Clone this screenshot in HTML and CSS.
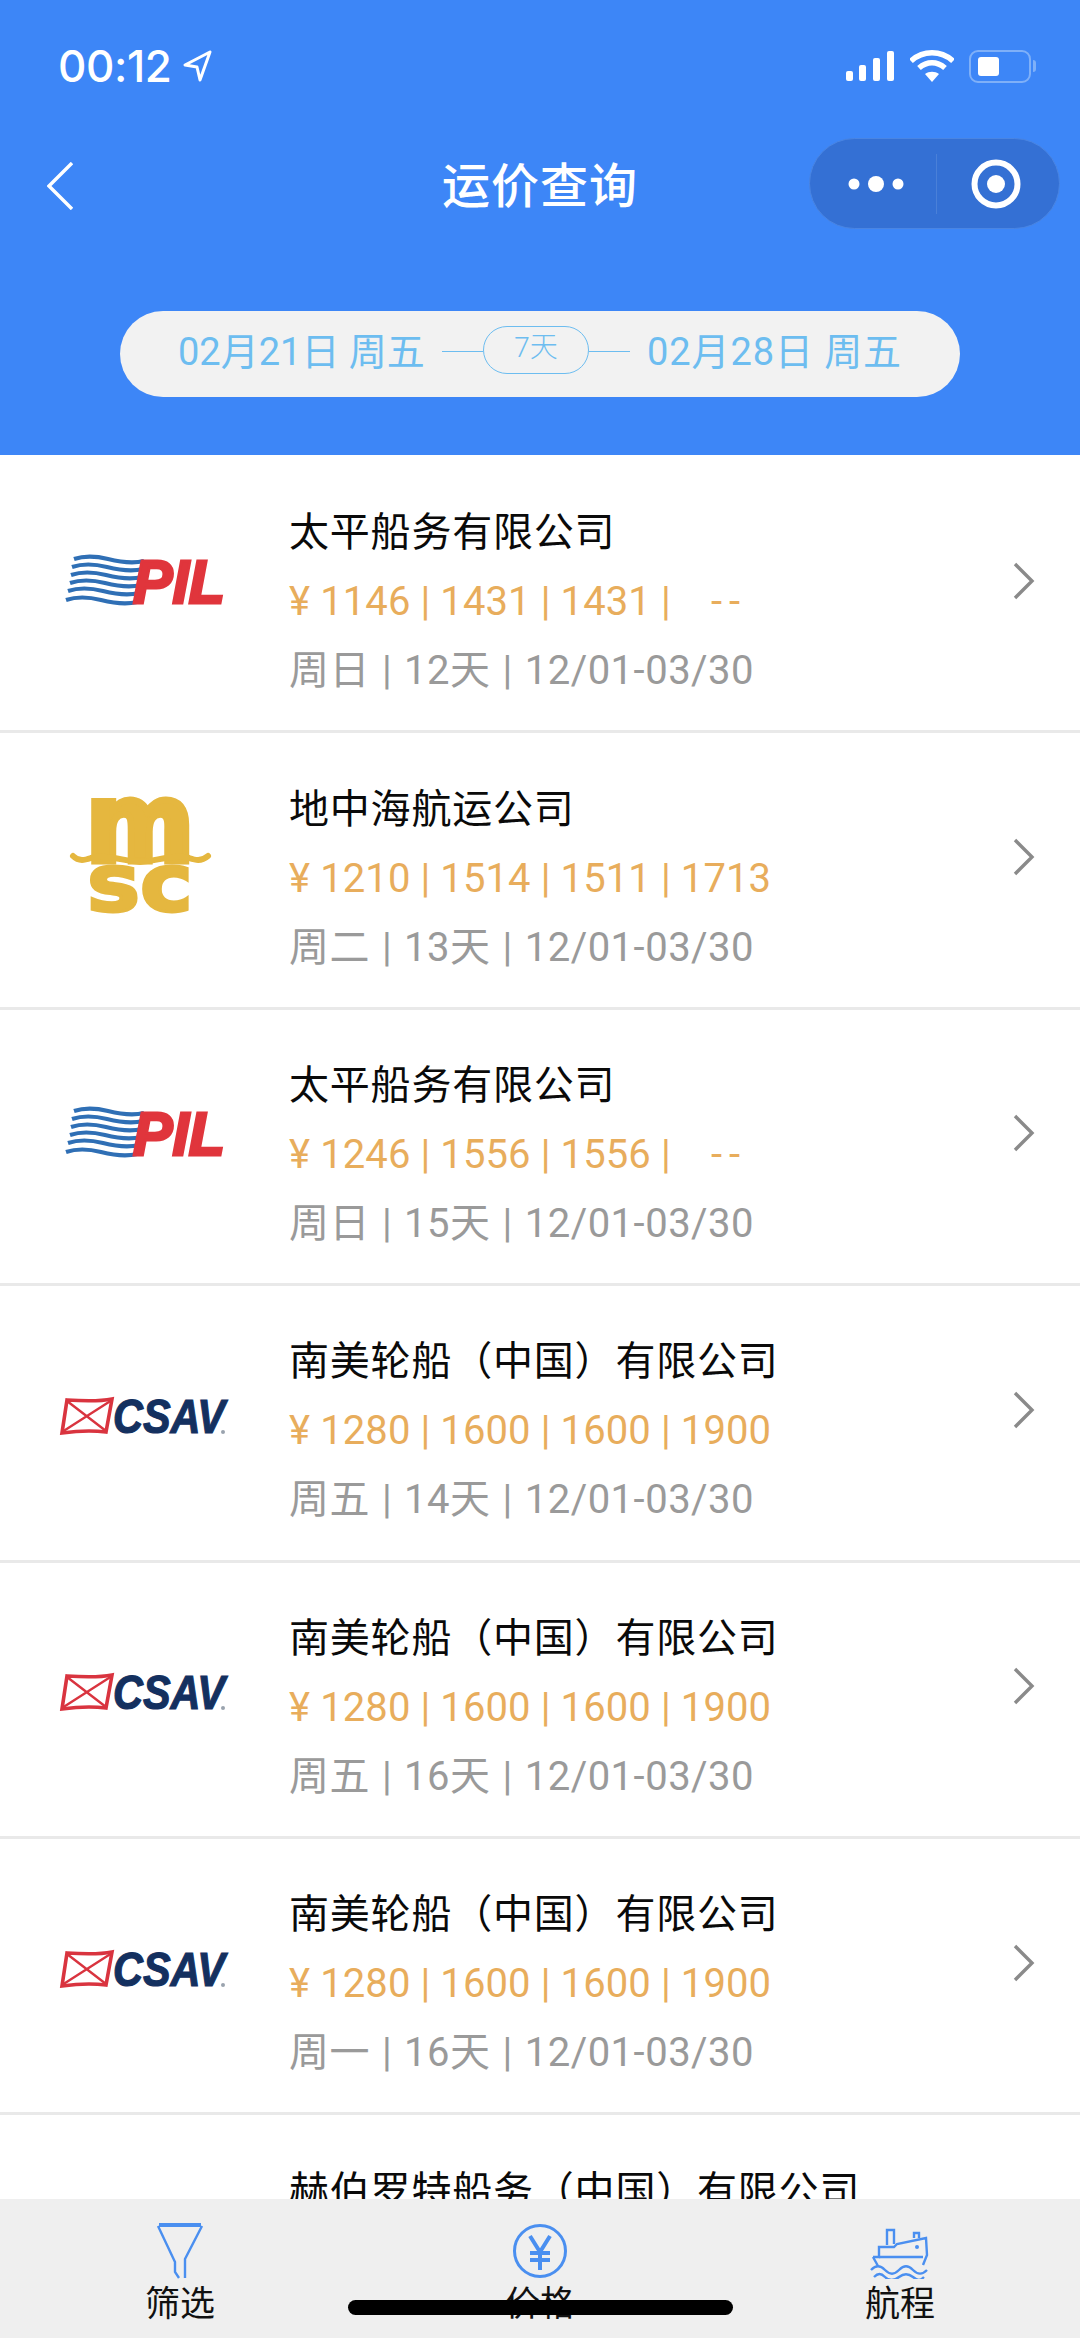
FILE: index.html
```html
<!DOCTYPE html>
<html lang="zh">
<head>
<meta charset="utf-8">
<title>运价查询</title>
<link rel="stylesheet" href="styles.css">
</head>
<body>
<svg class="defs" width="0" height="0" aria-hidden="true">
  <symbol id="chev" viewBox="0 0 24 40">
    <path d="M3 3l17 17L3 37" fill="none" stroke="#8a8a8a" stroke-width="3.4"/>
  </symbol>
  <symbol id="waves" viewBox="0 0 289 160">
    <g fill="none" stroke="#2f6fb5" stroke-width="4.2">
      <path d="M74 58c12-4 22-3 34 0s24 5 36 2"/>
      <path d="M72 66c12-4 23-3 35 0s24 5 36 2"/>
      <path d="M71 74c12-4 23-3 35 0s24 5 36 2"/>
      <path d="M70 82c12-4 23-3 35 0s24 5 36 2"/>
      <path d="M68 90c12-4 23-3 35 0s24 5 36 2"/>
      <path d="M66 99c12-4 23-3 35 0s24 5 36 2"/>
    </g>
  </symbol>
  <symbol id="flag" viewBox="0 0 289 160">
    <path d="M67 70c15 1 30 2 45-1l-6 33c-15-2-30-1-44 1z" fill="none" stroke="#d9343f" stroke-width="3.6"/>
    <path d="M67 71l39 30M112 70L62 102" fill="none" stroke="#d9343f" stroke-width="2.4"/>
    <circle cx="223" cy="102" r="2" fill="#9aa3ae"/>
  </symbol>
  <symbol id="wave-msc" viewBox="0 0 289 160">
    <path d="M73 79c6 6 12 4 18 2 16-4 32 3 49 4 17-1 33-8 49-4 6 2 12 4 19-2" fill="none" stroke="#e5b73f" stroke-width="6" stroke-linecap="round"/>
  </symbol>
</svg>

<div class="phone">
  <header class="header">
    <div class="status">
      <div class="time">00:12
        <svg class="loc" viewBox="0 0 30 32"><path d="M28 2L3 15l12 2 3 13z" fill="none" stroke="#fff" stroke-width="3" stroke-linejoin="round"/></svg>
      </div>
      <div class="status-right">
        <svg class="signal" viewBox="0 0 50 32"><rect x="1" y="21" width="7" height="10" rx="2"/><rect x="14" y="15" width="7" height="16" rx="2"/><rect x="28" y="8" width="7" height="23" rx="2"/><rect x="42" y="1" width="7" height="30" rx="2"/></svg>
        <svg class="wifi" viewBox="0 0 44 32"><path d="M1 11C13 0 31 0 43 11" fill="none" stroke="#fff" stroke-width="5.5"/><path d="M9 18c8-7 18-7 26 0" fill="none" stroke="#fff" stroke-width="5.5"/><path d="M15 24c4-3 10-3 14 0l-7 8z" fill="#fff"/></svg>
        <div class="battery"><span class="battery-level"></span></div>
        <span class="battery-nub"></span>
      </div>
    </div>
    <div class="nav">
      <div class="nav-left">
        <svg class="back" viewBox="0 0 26 48"><path d="M25 1L2 24l23 23" fill="none" stroke="#fff" stroke-width="3.4"/></svg>
      </div>
      <h1 class="nav-title">运价查询</h1>
      <div class="nav-right">
        <div class="capsule">
          <div class="capsule-cell">
            <svg class="dots" viewBox="0 0 56 20"><circle cx="6" cy="10" r="5.5"/><circle cx="28" cy="10" r="8"/><circle cx="50" cy="10" r="5.5"/></svg>
          </div>
          <div class="capsule-cell capsule-cell-right">
            <svg class="target" viewBox="0 0 50 50"><circle cx="25" cy="25" r="21.5" fill="none" stroke="#fff" stroke-width="6"/><circle cx="25" cy="25" r="9" fill="#fff"/></svg>
          </div>
        </div>
      </div>
    </div>
    <div class="range">
      <span class="range-date">02月21日 周五</span>
      <span class="range-line range-line-left"></span>
      <span class="range-days">7天</span>
      <span class="range-line range-line-right"></span>
      <span class="range-date range-date-end">02月28日 周五</span>
    </div>
  </header>

  <main class="list">
    <article class="row">
      <svg class="logo" viewBox="0 0 289 160"><use href="#waves"/><text class="logo-pil-text" x="133" y="102" textLength="92" lengthAdjust="spacingAndGlyphs">PIL</text></svg>
      <div class="info">
        <div class="name">太平船务有限公司</div>
        <div class="price">¥ 1146 | 1431 | 1431 |&nbsp;&nbsp;&nbsp; <span class="dash">--</span></div>
        <div class="meta">周日 | 12天 | 12/01-03/30</div>
      </div>
      <svg class="chev"><use href="#chev"/></svg>
    </article>
    <article class="row">
      <svg class="logo" viewBox="0 0 289 160"><text class="logo-msc-m" x="86" y="84" textLength="108" lengthAdjust="spacingAndGlyphs">m</text><use href="#wave-msc"/><text class="logo-msc-sc" x="87" y="134" textLength="106" lengthAdjust="spacingAndGlyphs">sc</text></svg>
      <div class="info">
        <div class="name">地中海航运公司</div>
        <div class="price">¥ 1210 | 1514 | 1511 | 1713</div>
        <div class="meta">周二 | 13天 | 12/01-03/30</div>
      </div>
      <svg class="chev"><use href="#chev"/></svg>
    </article>
    <article class="row">
      <svg class="logo" viewBox="0 0 289 160"><use href="#waves"/><text class="logo-pil-text" x="133" y="102" textLength="92" lengthAdjust="spacingAndGlyphs">PIL</text></svg>
      <div class="info">
        <div class="name">太平船务有限公司</div>
        <div class="price">¥ 1246 | 1556 | 1556 |&nbsp;&nbsp;&nbsp; <span class="dash">--</span></div>
        <div class="meta">周日 | 15天 | 12/01-03/30</div>
      </div>
      <svg class="chev"><use href="#chev"/></svg>
    </article>
    <article class="row">
      <svg class="logo" viewBox="0 0 289 160"><use href="#flag"/><text class="logo-csav-text" x="113" y="103" textLength="112" lengthAdjust="spacingAndGlyphs">CSAV</text></svg>
      <div class="info">
        <div class="name">南美轮船（中国）有限公司</div>
        <div class="price">¥ 1280 | 1600 | 1600 | 1900</div>
        <div class="meta">周五 | 14天 | 12/01-03/30</div>
      </div>
      <svg class="chev"><use href="#chev"/></svg>
    </article>
    <article class="row">
      <svg class="logo" viewBox="0 0 289 160"><use href="#flag"/><text class="logo-csav-text" x="113" y="103" textLength="112" lengthAdjust="spacingAndGlyphs">CSAV</text></svg>
      <div class="info">
        <div class="name">南美轮船（中国）有限公司</div>
        <div class="price">¥ 1280 | 1600 | 1600 | 1900</div>
        <div class="meta">周五 | 16天 | 12/01-03/30</div>
      </div>
      <svg class="chev"><use href="#chev"/></svg>
    </article>
    <article class="row">
      <svg class="logo" viewBox="0 0 289 160"><use href="#flag"/><text class="logo-csav-text" x="113" y="103" textLength="112" lengthAdjust="spacingAndGlyphs">CSAV</text></svg>
      <div class="info">
        <div class="name">南美轮船（中国）有限公司</div>
        <div class="price">¥ 1280 | 1600 | 1600 | 1900</div>
        <div class="meta">周一 | 16天 | 12/01-03/30</div>
      </div>
      <svg class="chev"><use href="#chev"/></svg>
    </article>
    <article class="row">
      <svg class="logo"></svg>
      <div class="info">
        <div class="name">赫伯罗特船务（中国）有限公司</div>
      </div>
    </article>
  </main>

  <nav class="tabs">
    <div class="tab">
      <svg class="tab-icon" viewBox="0 0 60 56"><path d="M9 2h42" fill="none" stroke="#4a8ff0" stroke-width="4"/><path d="M8 3l17 36v10l4 6M52 3L35 36v19" fill="none" stroke="#4a8ff0" stroke-width="2.4"/></svg>
      <span class="tab-label">筛选</span>
    </div>
    <div class="tab">
      <svg class="tab-icon" viewBox="0 0 60 56"><circle cx="30" cy="28" r="25.5" fill="none" stroke="#4a8ff0" stroke-width="3"/><path d="M20 13l10 16 10-16M30 29v18M20 30h20M20 37h20" fill="none" stroke="#4a8ff0" stroke-width="4"/></svg>
      <span class="tab-label">价格</span>
    </div>
    <div class="tab">
      <svg class="tab-icon" viewBox="0 0 60 56"><g fill="none" stroke="#4a8ff0" stroke-width="2.4"><path d="M17 22V7h7v14M44 15v-5h5v5"/><path d="M3 34h6V24h15l3-3 29-6 1 17-4 10"/><path d="M3 34l5 9M9 34h44"/><path d="M1 47c5-5 9-5 14 0s9 5 14 0 9-5 14 0 9 5 14 0"/><path d="M4 54c4-4 7-4 11 0s9 4 14 0 9-4 14 0 7 4 11 0"/></g><circle cx="47" cy="24" r="2" fill="#4a8ff0"/></svg>
      <span class="tab-label">航程</span>
    </div>
  </nav>
  <div class="home-bar"></div>
</div>
</body>
</html>
```
FILE: styles.css
```css
* { box-sizing: border-box; }
html, body { margin: 0; padding: 0; }
body {
  font-family: Roboto, "Noto Sans CJK SC", sans-serif;
  background: #fff;
  overflow: hidden;
}
.defs { position: absolute; }
.phone {
  position: relative;
  width: 1080px;
  height: 2338px;
  display: flex;
  flex-direction: column;
  overflow: hidden;
}

/* Header */
.header {
  flex: none;
  height: 455px;
  background: #3d86f7;
  color: #fff;
}
.status {
  height: 138px;
  padding: 44px 44px 0 58px;
  display: flex;
  justify-content: space-between;
  align-items: flex-start;
}
.time {
  display: flex;
  align-items: center;
  gap: 10px;
  font-family: Inter, sans-serif;
  font-size: 44px;
  font-weight: 500;
  line-height: 44px;
  letter-spacing: -0.4px;
}
.loc { width: 30px; height: 32px; }
.status-right {
  display: flex;
  align-items: center;
  height: 44px;
}
.signal { width: 50px; height: 32px; fill: #fff; }
.wifi { width: 44px; height: 32px; margin-left: 15px; }
.battery {
  width: 62px;
  height: 33px;
  margin-left: 15px;
  padding: 5px 7px;
  border: 2.5px solid #7fb0f8;
  border-radius: 9px;
}
.battery-level {
  display: block;
  width: 21px;
  height: 100%;
  background: #fff;
  border-radius: 3px;
}
.battery-nub {
  width: 3px;
  height: 12px;
  margin-left: 2px;
  background: #7fb0f8;
  border-radius: 0 3px 3px 0;
}

.nav {
  height: 91px;
  display: grid;
  grid-template-columns: 1fr auto 1fr;
  align-items: center;
}
.nav-left { padding: 4px 0 0 47px; display: flex; }
.back { width: 26px; height: 48px; }
.nav-title {
  margin: -3px 0 0;
  font-family: "Noto Sans CJK SC", sans-serif;
  font-size: 48px;
  font-weight: 500;
  letter-spacing: 1px;
  line-height: 88px;
}
.nav-right { display: flex; justify-content: flex-end; padding-right: 20px; }
.capsule {
  width: 251px;
  height: 91px;
  display: flex;
  align-items: center;
  background: #3470d4;
  border: 1px solid #4a85e2;
  border-radius: 46px;
}
.capsule-cell {
  flex: 1;
  height: 60px;
  display: flex;
  align-items: center;
  justify-content: center;
  padding-left: 6px;
}
.capsule-cell-right {
  border-left: 1px solid #4a80d8;
  padding: 0 3px 0 0;
}
.dots { width: 56px; height: 20px; fill: #fff; }
.target { width: 50px; height: 50px; }

.range {
  width: 840px;
  height: 86px;
  margin: 82px auto 0;
  padding: 0 58px;
  display: flex;
  align-items: center;
  justify-content: space-between;
  background: #f2f2f2;
  border-radius: 43px;
  color: #6dbdf0;
}
.range-date {
  font-size: 38px;
  line-height: 82px;
  margin-bottom: 4px;
  white-space: nowrap;
}
.range-date-end { letter-spacing: 0.9px; }
.range-line {
  flex: 1;
  height: 1px;
  background: #6dbdf0;
  margin-bottom: 6px;
}
.range-line-left { margin-left: 17px; }
.range-line-right { margin-right: 17px; }
.range-days {
  flex: none;
  width: 106px;
  height: 48px;
  margin-bottom: 8px;
  border: 1px solid #6dbdf0;
  border-radius: 24px;
  font-size: 28px;
  font-weight: 300;
  line-height: 42px;
  text-align: center;
}

/* List */
.list {
  flex: 1;
  min-height: 0;
  overflow: hidden;
  padding-top: 2px;
}
.row {
  height: 276.4px;
  display: grid;
  grid-template-columns: 289px 1fr auto;
  align-items: center;
  padding: 16px 44px 0 0;
  border-bottom: 3px solid #e9e9e9;
}
.logo {
  width: 289px;
  height: 160px;
  margin-bottom: 42px;
}
.info { min-width: 0; height: 207px; }
.name {
  font-family: "Noto Sans CJK SC", sans-serif;
  font-size: 40px;
  line-height: 63px;
  margin-bottom: 6px;
  letter-spacing: 0.8px;
  color: #0a0a0a;
  white-space: nowrap;
}
.price {
  font-size: 40px;
  line-height: 69px;
  letter-spacing: 0.1px;
  color: #e8ad5c;
  white-space: nowrap;
}
.dash { letter-spacing: 7px; }
.meta {
  font-size: 40px;
  line-height: 69px;
  word-spacing: 1.5px;
  letter-spacing: 0.5px;
  color: #9a9a9a;
  white-space: nowrap;
}
.chev {
  width: 24px;
  height: 40px;
  margin-bottom: 42px;
}

/* Logo text */
.logo-pil-text {
  font: italic 700 62px "Liberation Sans", sans-serif;
  fill: #e0353c;
  stroke: #e0353c;
  stroke-width: 3px;
}
.logo-csav-text {
  font: italic 700 48px "Liberation Sans", sans-serif;
  fill: #14305f;
  stroke: #14305f;
  stroke-width: 1.2px;
}
.logo-msc-m {
  font: 700 108px "DejaVu Sans", sans-serif;
  fill: #e5b73f;
  stroke: #e5b73f;
  stroke-width: 7px;
}
.logo-msc-sc {
  font: 700 80px "DejaVu Sans", sans-serif;
  fill: #e5b73f;
  stroke: #e5b73f;
  stroke-width: 3px;
}

/* Tabs */
.tabs {
  position: absolute;
  left: 0;
  right: 0;
  bottom: 0;
  height: 139px;
  padding-top: 24px;
  display: grid;
  grid-template-columns: repeat(3, 1fr);
  background: #efefef;
}
.tab {
  display: flex;
  flex-direction: column;
  align-items: center;
}
.tab-icon { width: 60px; height: 56px; }
.tab-label {
  font-family: "Noto Sans CJK SC", sans-serif;
  font-size: 35px;
  line-height: 44px;
  color: #111;
}
.home-bar {
  position: absolute;
  left: 348px;
  top: 2300px;
  width: 385px;
  height: 15px;
  background: #000;
  border-radius: 8px;
}
```
